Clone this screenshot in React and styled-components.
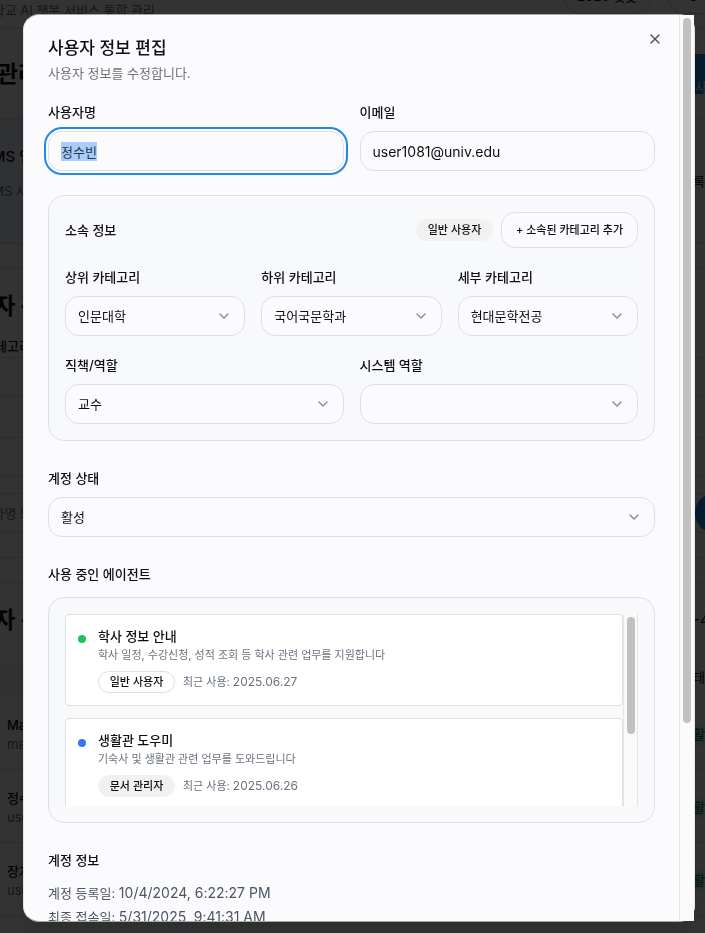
import React, { useEffect, useRef } from 'react';
import styled, { createGlobalStyle } from 'styled-components';
import { ChevronDown, X } from 'lucide-react';

const GlobalStyle = createGlobalStyle`
  *, *::before, *::after { box-sizing: border-box; }
  body {
    margin: 0;
    overflow: hidden;
    background: #fff;
    color: #0f0f12;
    font-family: Inter, "Noto Sans CJK KR", sans-serif;
    font-size: 13px;
    line-height: 20px;
  }
  h1, h2, h3, p, ul { margin: 0; padding: 0; }
  button, input, select { font: inherit; color: inherit; }
`;

/* ---------- page behind the dialog ---------- */

const Page = styled.div`
  height: 100vh;
  overflow: hidden;
  display: flex;
  flex-direction: column;
  white-space: nowrap;
`;

const TopBar = styled.header`
  flex: none;
  height: 66px;
  margin-top: -37px;
  display: flex;
  align-items: center;
  gap: 16px;
  border-bottom: 1px solid #dcdce0;
`;

const Clip = styled.div`
  flex: none;
  width: ${(p) => p.$width}px;
  display: flex;
  justify-content: flex-end;
  overflow: hidden;
`;

const Tagline = styled(Clip)`
  align-self: flex-end;
  margin-right: auto;
  padding-bottom: 8px;
  color: #71717a;
`;

const TopButton = styled.button`
  flex: none;
  width: 88px;
  height: 36px;
  padding: 0;
  border: 1px solid #d4d4d8;
  border-radius: 18px;
  background: #fff;
  font-weight: 500;
  &:last-child { margin-right: -50px; padding-right: 36px; }
`;

const Band = styled.section`
  flex: none;
  height: ${(p) => p.$height}px;
  padding: ${(p) => p.$pad || 0};
  display: flex;
  align-items: center;
  justify-content: space-between;
  border-bottom: 1px solid ${(p) => p.$line || '#dcdce0'};
  background: ${(p) => p.$fill || 'transparent'};
`;

const Stack = styled.div`
  display: flex;
  flex-direction: column;
  gap: 14px;
`;

const PageTitle = styled.h1`
  font-size: 23px;
  line-height: 32px;
  font-weight: 700;
`;

const Strong = styled.p`
  font-size: ${(p) => p.$size || 13}px;
  font-weight: 500;
`;

const Muted = styled.p`
  color: #71717a;
`;

const EdgeButton = styled.button`
  flex: none;
  width: 40px;
  height: 40px;
  margin-right: -30px;
  padding: 0;
  border: 0;
  border-radius: ${(p) => (p.$round ? 20 : 0)}px;
  background: #2388ea;
  color: #fff;
  text-align: left;
  padding-top: ${(p) => (p.$round ? 0 : 26)}px;
  line-height: 14px;
`;

const EdgeText = styled.div`
  flex: none;
  width: 12px;
  overflow: hidden;
  display: flex;
  font-size: ${(p) => p.$size || 13}px;
`;

const Person = styled.div`
  padding-left: 7px;
  line-height: 19px;
`;

const StatusTag = styled.span`
  flex: none;
  width: 12px;
  height: 22px;
  overflow: hidden;
  background: #dcfce7;
  color: #15803d;
  font-weight: 500;
`;

/* ---------- dialog ---------- */

const Overlay = styled.div`
  position: fixed;
  inset: 0;
  display: flex;
  padding: 14px 10px 11px 23px;
  background: rgba(0, 0, 0, 0.8);
`;

const Dialog = styled.div`
  position: relative;
  flex: 1;
  display: flex;
  min-width: 0;
  border: 1px solid #e4e4e7;
  border-top-color: #a8a8aa;
  border-bottom-color: #a8a8aa;
  border-radius: 16px;
  background: #fbfbfd;
  box-shadow: 0 10px 15px rgba(0, 0, 0, 0.1);
`;

const Content = styled.form`
  flex: 1;
  min-width: 0;
  overflow: hidden;
  padding: 24px;
  border-radius: 15px 0 0 15px;
`;

const Track = styled.div`
  flex: none;
  width: 15px;
  padding: 3px 0 3px 3px;
  border: solid #e5e5e7;
  border-width: 0 ${(p) => (p.$inner ? 1 : 0)}px 0 1px;
  background: #fafafa;
`;

const Thumb = styled.div`
  width: 8px;
  height: ${(p) => (p.$visible / p.$total) * 100}%;
  border-radius: 4px;
  background: #c1c1c1;
`;

const CloseButton = styled.button`
  position: absolute;
  top: 16px;
  right: 31px;
  display: flex;
  padding: 0;
  border: 0;
  background: none;
  color: #505054;
`;

const Title = styled.h2`
  font-size: 17px;
  line-height: 18px;
  font-weight: 500;
`;

const Description = styled.p`
  margin: 6px 0 20px;
  color: #71717a;
`;

const Columns = styled.div`
  display: grid;
  grid-template-columns: repeat(${(p) => p.$count}, minmax(0, 1fr));
  gap: 16px;
`;

const Field = styled.div`
  display: flex;
  flex-direction: column;
  gap: 10px;
  margin-top: ${(p) => p.$top || 0}px;
`;

const Label = styled.label`
  line-height: 18px;
  font-weight: 500;
`;

const Heading = styled.h3`
  font-size: 13px;
  line-height: 18px;
  font-weight: 500;
`;

const SectionHeading = styled(Heading)`
  margin: 28px 0 14px;
`;

const TextInput = styled.input`
  width: 100%;
  height: 40px;
  padding: 0 12px;
  border: 1px solid #e0e0e3;
  border-radius: 14px;
  background: #fbfbfd;
  font-size: ${(p) => (p.type === 'email' ? 14 : 13)}px;
  &:focus { outline: 2px solid #2388e6; outline-offset: 2px; }
  &::selection { background: #a9cdf8; color: #26364c; }
`;

const SelectBox = styled.div`
  position: relative;
  svg {
    position: absolute;
    right: 13px;
    top: 12px;
    color: #88888c;
    pointer-events: none;
  }
`;

const NativeSelect = styled.select`
  display: block;
  appearance: none;
  width: 100%;
  height: 40px;
  padding: 0 36px 0 12px;
  border: 1px solid #e0e0e3;
  border-radius: 14px;
  background: #fbfbfd;
`;

const Panel = styled.section`
  display: flex;
  flex-direction: column;
  gap: 20px;
  margin-top: ${(p) => p.$top || 0}px;
  padding: 16px;
  border: 1px solid #e0e0e3;
  border-radius: 16px;
  background: #f8f9fb;
`;

const PanelHeader = styled.div`
  display: flex;
  align-items: center;
  justify-content: space-between;
`;

const Actions = styled.div`
  display: flex;
  align-items: center;
  gap: 8px;
`;

const Badge = styled.span`
  display: inline-flex;
  align-items: center;
  justify-content: center;
  min-width: 77px;
  height: 22px;
  padding: 0 10px;
  border: 1px solid ${(p) => (p.$outline ? '#e0e0e3' : '#f1f1f1')};
  border-radius: 11px;
  background: ${(p) => (p.$outline ? '#fff' : '#f1f1f1')};
  font-size: 11px;
  line-height: 16px;
  font-weight: 500;
`;

const AddButton = styled.button`
  height: 36px;
  min-width: 137px;
  padding: 0 12px;
  border: 1px solid #e0e0e3;
  border-radius: 14px;
  background: #fbfbfd;
  font-size: 11px;
  font-weight: 500;
`;

const ListFrame = styled.div`
  display: flex;
  height: 192px;
  overflow: hidden;
`;

const AgentList = styled.ul`
  flex: 1;
  min-width: 0;
  display: flex;
  flex-direction: column;
  gap: 12px;
  list-style: none;
`;

const AgentCard = styled.li`
  flex: none;
  display: flex;
  gap: 12px;
  padding: 12px;
  border: 1px solid #e0e0e3;
  border-radius: 4px;
  background: #fff;
`;

const AgentBody = styled.div`
  display: flex;
  flex-direction: column;
  gap: 2px;
`;

const Dot = styled.span`
  flex: none;
  width: 8px;
  height: 8px;
  margin-top: 8px;
  border-radius: 50%;
  background: ${(p) => p.$color};
`;

const AgentText = styled.p`
  color: #6b7280;
  font-size: 11px;
  line-height: 16px;
`;

const AgentMeta = styled.div`
  display: flex;
  align-items: center;
  gap: 8px;
  margin-top: 6px;
`;

const Latin = styled.span`
  font-size: ${(p) => p.$size}px;
`;

const InfoLine = styled.p`
  margin-bottom: 4px;
  color: #4b5563;
`;

const people = [
  ['Manager', 'manager@univ.edu'],
  ['정수빈', 'user1081@univ.edu'],
  ['장지훈', 'user1080@univ.edu'],
];

const agents = [
  { name: '학사 정보 안내', text: '학사 일정, 수강신청, 성적 조회 등 학사 관련 업무를 지원합니다', role: '일반 사용자', date: '2025.06.27', color: '#22c05c', outline: true },
  { name: '생활관 도우미', text: '기숙사 및 생활관 관련 업무를 도와드립니다', role: '문서 관리자', date: '2025.06.26', color: '#3478f0', outline: false },
];

function SelectField({ id, label, value, top }) {
  return (
    <Field $top={top}>
      <Label htmlFor={id}>{label}</Label>
      <SelectBox>
        <NativeSelect id={id} defaultValue={value}>
          <option value={value}>{value}</option>
        </NativeSelect>
        <ChevronDown size={16} aria-hidden="true" />
      </SelectBox>
    </Field>
  );
}

function BackgroundPage() {
  return (
    <Page aria-hidden="true">
      <TopBar>
        <Tagline $width={155}>대학교 AI 챗봇 서비스 통합 관리</Tagline>
        <TopButton tabIndex={-1}>2026 챗봇</TopButton>
        <TopButton tabIndex={-1}>C</TopButton>
      </TopBar>
      <Band $height={90} $line="#bfdbfe">
        <Clip $width={39}><PageTitle>챗봇 관리</PageTitle></Clip>
        <EdgeButton tabIndex={-1}>사용자</EdgeButton>
      </Band>
      <Band $height={125} $line="#bfdbfe" $fill="linear-gradient(90deg, #eff6ff, #f0fdf4)">
        <Stack>
          <Clip $width={33}><Strong $size={15}>LMS 연</Strong></Clip>
          <Clip $width={28}><Muted>LMS 사</Muted></Clip>
          <span />
        </Stack>
        <EdgeText>록된</EdgeText>
      </Band>
      <Band $height={25} />
      <Band $height={89} $pad="20px 0 0">
        <Stack>
          <Clip $width={42}><PageTitle>사용자 관</PageTitle></Clip>
          <Clip $width={31}><Strong>카테고리</Strong></Clip>
        </Stack>
      </Band>
      <Band $height={39} />
      <Band $height={41} />
      <Band $height={39} />
      <Band $height={17} />
      <Band $height={39}>
        <Clip $width={32}><Muted>사용자명 또</Muted></Clip>
        <EdgeButton tabIndex={-1} $round aria-label="검색" />
      </Band>
      <Band $height={25} />
      <Band $height={25} />
      <Band $height={75} $line="transparent">
        <Clip $width={42}><PageTitle>사용자 목</PageTitle></Clip>
        <EdgeText $size={15}>-4</EdgeText>
      </Band>
      <Band $height={39} $line="transparent" $fill="#fafafa">
        <span />
        <EdgeText>태</EdgeText>
      </Band>
      {people.map(([name, mail]) => (
        <Band key={name} $height={73} $pad="4px 0 0">
          <Person>
            <Strong>{name}</Strong>
            <Muted>{mail}</Muted>
          </Person>
          <StatusTag>활성</StatusTag>
        </Band>
      ))}
    </Page>
  );
}

export default function App() {
  const nameRef = useRef(null);

  useEffect(() => {
    nameRef.current.focus();
    nameRef.current.select();
  }, []);

  return (
    <>
      <GlobalStyle />
      <BackgroundPage />
      <Overlay>
        <Dialog role="dialog" aria-modal="true" aria-labelledby="dialog-title">
          <Content>
            <Title id="dialog-title">사용자 정보 편집</Title>
            <Description>사용자 정보를 수정합니다.</Description>

            <Columns $count={2}>
              <Field>
                <Label htmlFor="name">사용자명</Label>
                <TextInput id="name" type="text" ref={nameRef} defaultValue="정수빈" />
              </Field>
              <Field>
                <Label htmlFor="email">이메일</Label>
                <TextInput id="email" type="email" defaultValue="user1081@univ.edu" />
              </Field>
            </Columns>

            <Panel $top={24}>
              <PanelHeader>
                <Heading>소속 정보</Heading>
                <Actions>
                  <Badge>일반 사용자</Badge>
                  <AddButton type="button">+ 소속된 카테고리 추가</AddButton>
                </Actions>
              </PanelHeader>
              <Columns $count={3}>
                <SelectField id="top-category" label="상위 카테고리" value="인문대학" />
                <SelectField id="sub-category" label="하위 카테고리" value="국어국문학과" />
                <SelectField id="detail-category" label="세부 카테고리" value="현대문학전공" />
              </Columns>
              <Columns $count={2}>
                <SelectField id="position" label="직책/역할" value="교수" />
                <SelectField id="system-role" label="시스템 역할" value="" />
              </Columns>
            </Panel>

            <SelectField id="status" label="계정 상태" value="활성" top={28} />

            <SectionHeading>사용 중인 에이전트</SectionHeading>
            <Panel>
              <ListFrame>
                <AgentList>
                  {agents.map((agent) => (
                    <AgentCard key={agent.name}>
                      <Dot $color={agent.color} />
                      <AgentBody>
                        <Heading>{agent.name}</Heading>
                        <AgentText>{agent.text}</AgentText>
                        <AgentMeta>
                          <Badge $outline={agent.outline}>{agent.role}</Badge>
                          <AgentText>최근 사용: <Latin $size={12}>{agent.date}</Latin></AgentText>
                        </AgentMeta>
                      </AgentBody>
                    </AgentCard>
                  ))}
                </AgentList>
                <Track $inner><Thumb $visible={192} $total={304} /></Track>
              </ListFrame>
            </Panel>

            <SectionHeading>계정 정보</SectionHeading>
            <InfoLine>계정 등록일: <Latin $size={14}>10/4/2024, 6:22:27 PM</Latin></InfoLine>
            <InfoLine>최종 접속일: <Latin $size={14}>5/31/2025, 9:41:31 AM</Latin></InfoLine>
          </Content>
          <Track><Thumb $visible={906} $total={1156} /></Track>
          <CloseButton type="button" aria-label="닫기"><X size={16} /></CloseButton>
        </Dialog>
      </Overlay>
    </>
  );
}
